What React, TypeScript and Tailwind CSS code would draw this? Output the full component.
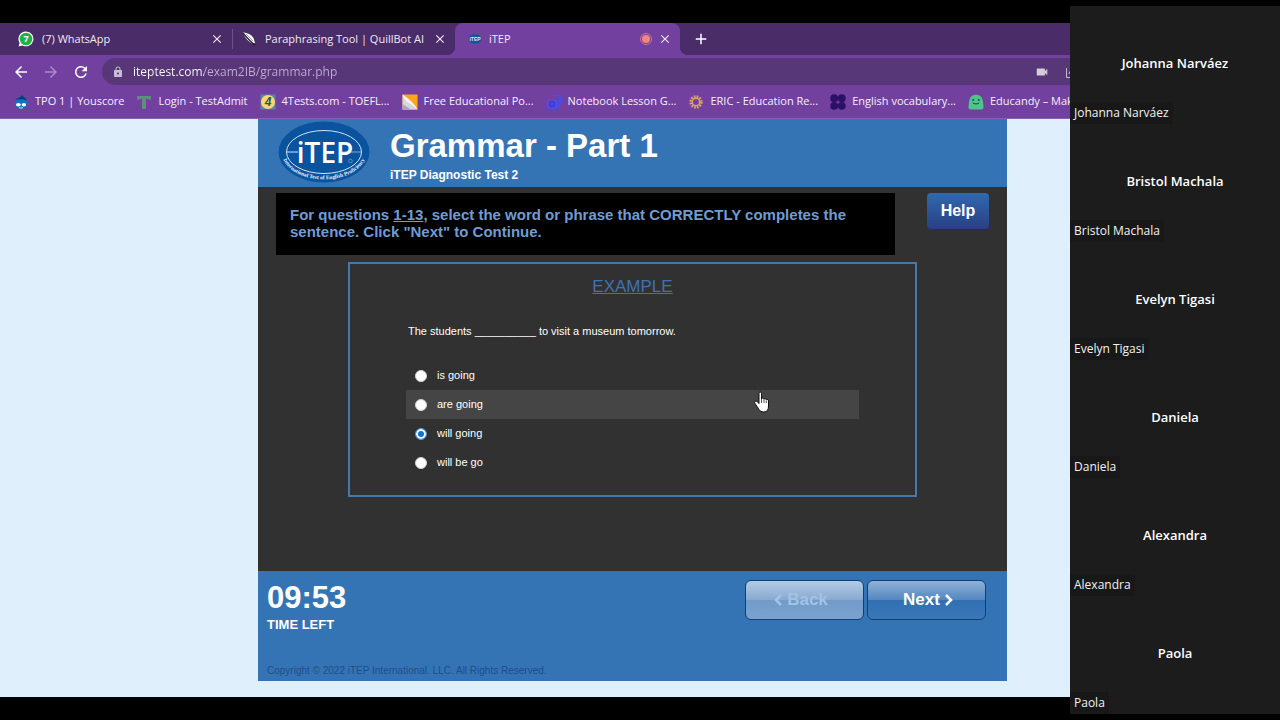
import { useState } from "react";
import type { ReactNode } from "react";
import { MdAdd, MdArrowBack, MdArrowForward, MdClose, MdLock, MdRefresh, MdVideocam } from "react-icons/md";

const participants = ["Johanna Narváez", "Bristol Machala", "Evelyn Tigasi", "Daniela", "Alexandra", "Paola"];

const choices = ["is going", "are going", "will going", "will be go"];

function WhatsAppIcon() {
  return (
    <svg viewBox="0 0 16 16" className="size-4 shrink-0" aria-hidden="true">
      <path d="M8 .5a7.4 7.4 0 1 1-3.5 13.9L.6 15.5l1-3.7A7.4 7.4 0 0 1 8 .5Z" fill="#fff" />
      <circle cx="8" cy="8" r="6.3" fill="#1fb24a" />
      <text x="8" y="11.3" textAnchor="middle" fontSize="9" fontWeight="700" fill="#fff" fontFamily="Open Sans">
        7
      </text>
    </svg>
  );
}

function QuillIcon() {
  return (
    <svg viewBox="0 0 16 16" className="size-4 shrink-0" aria-hidden="true">
      <path d="M2 1.500C6.500 1.800 10.500 3.500 12.500 7l1.500 5-2 .8C7.500 10.500 4 7.500 2 1.500Z" fill="#fff" />
      <path d="M2.200 2.200c3 4 6.500 7.500 11.500 11.800" stroke="#1d1226" strokeWidth="1.200" fill="none" />
      <path d="M5 3 12 10" stroke="#555" strokeWidth=".6" fill="none" />
    </svg>
  );
}

function ItepFavicon() {
  return (
    <svg viewBox="0 0 16 16" className="size-4 shrink-0" aria-hidden="true">
      <ellipse cx="8" cy="8" rx="6.500" ry="4.800" fill="#14549b" />
      <text x="8" y="9.800" textAnchor="middle" fontSize="5" fontWeight="700" fill="#dcebfa" fontFamily="Liberation Sans">
        iTEP
      </text>
    </svg>
  );
}

function DropIcon() {
  return (
    <svg viewBox="0 0 16 16" className="size-4 shrink-0" aria-hidden="true">
      <path d="M9 1c.8 1.700 5.200 3.600 5.200 8A6.200 6.200 0 0 1 8 15a6.200 6.200 0 0 1-6.200-6C1.800 5 7.500 4 9 1Z" fill="#0b74c4" />
      <path d="M9 1c.8 1.700 4 2.800 4.900 5.700C11 5 6 5 2.600 6.300 4.200 4 8 3.200 9 1Z" fill="#0a3a75" />
      <ellipse cx="5.400" cy="10.700" rx="2.400" ry="1.800" fill="#fff" />
      <ellipse cx="10.900" cy="10.700" rx="2.200" ry="1.800" fill="#fff" />
      <path d="M6 13.600q2 1 4 0" stroke="#fff" strokeWidth=".8" fill="none" />
    </svg>
  );
}

function TestAdmitIcon() {
  return (
    <svg viewBox="0 0 16 16" className="size-4 shrink-0" fill="#5f8f7c" aria-hidden="true">
      <rect x="1.500" y="2" width="13" height="3" />
      <rect x="1.500" y="2" width="1.500" height="4" />
      <rect x="13" y="2" width="1.500" height="4" />
      <rect x="6" y="2" width="4" height="13" />
    </svg>
  );
}

function FourTestsIcon() {
  return (
    <svg viewBox="0 0 16 16" className="size-4 shrink-0" aria-hidden="true">
      <rect x=".5" y=".5" width="15" height="15" fill="#5d83a0" />
      <circle cx="8" cy="8" r="7" fill="#f6d873" />
      <text x="8" y="12.300" textAnchor="middle" fontSize="12" fontWeight="700" fontStyle="italic" fill="#245b58" fontFamily="Liberation Sans">
        4
      </text>
    </svg>
  );
}

function PosterIcon() {
  return (
    <svg viewBox="0 0 16 16" className="size-4 shrink-0" aria-hidden="true">
      <rect x=".5" y=".5" width="15" height="15" fill="#ffa51e" />
      <path d="M.5.500 15.500 15.500H.5Z" fill="#d9d4de" />
      <path d="M.5 10v5.500H9Z" fill="#aaa5b5" />
      <path d="M.5.500Q3 8 8 9.500l7.500 6Q12 8 .5.500Z" fill="#f7f5f5" />
    </svg>
  );
}

function NotebookIcon() {
  return (
    <svg viewBox="0 0 16 16" className="size-4 shrink-0" fill="none" stroke="#4b4be6" aria-hidden="true">
      <path d="M5.500 3V1.500h9v9H13" />
      <path d="M3.500 5V3.500h9v9H11" />
      <rect x="1.500" y="5.500" width="9" height="9" fill="#5a45d4" />
      <path d="M4 8v4h4V8Z" stroke="#3434d0" />
    </svg>
  );
}

function EricIcon() {
  return (
    <svg viewBox="0 0 16 16" className="size-4 shrink-0" fill="none" aria-hidden="true">
      <circle cx="8" cy="8" r="5.300" stroke="#dda36c" strokeWidth="2.800" strokeDasharray="1.600 1.175" />
      <circle cx="8" cy="8" r="3.700" stroke="#dda36c" strokeWidth="1.400" />
    </svg>
  );
}

function VocabularyIcon() {
  return (
    <svg viewBox="0 0 16 16" className="size-4 shrink-0" fill="#2c0f66" aria-hidden="true">
      <circle cx="4.200" cy="4.200" r="3.900" />
      <circle cx="11.800" cy="4.200" r="3.900" />
      <circle cx="4.200" cy="11.800" r="3.900" />
      <circle cx="11.800" cy="11.800" r="3.900" />
    </svg>
  );
}

function EducandyIcon() {
  return (
    <svg viewBox="0 0 16 16" className="size-4 shrink-0" aria-hidden="true">
      <path d="M.5 13.500C.8 6 2 .8 8 .8s7.200 5.200 7.500 12.700q0 2-2 2h-11q-2 0-2-2Z" fill="#4fc48a" />
      <circle cx="5.200" cy="6" r="1" fill="#14523a" />
      <circle cx="10.800" cy="6" r="1" fill="#14523a" />
      <path d="M5 9.300q3 1.400 6 0" stroke="#14523a" fill="none" />
    </svg>
  );
}

const bookmarks: { label: string; icon: ReactNode }[] = [
  { label: "TPO 1 | Youscore", icon: <DropIcon /> },
  { label: "Login - TestAdmit", icon: <TestAdmitIcon /> },
  { label: "4Tests.com - TOEFL...", icon: <FourTestsIcon /> },
  { label: "Free Educational Po...", icon: <PosterIcon /> },
  { label: "Notebook Lesson G...", icon: <NotebookIcon /> },
  { label: "ERIC - Education Re...", icon: <EricIcon /> },
  { label: "English vocabulary...", icon: <VocabularyIcon /> },
  { label: "Educandy – Mak", icon: <EducandyIcon /> },
];

function ItepLogo() {
  return (
    <svg viewBox="0 0 92 62" className="h-[62px] w-[92px] shrink-0" role="img" aria-label="iTEP">
      <ellipse cx="46" cy="31" rx="45.500" ry="30.500" fill="#0a539e" />
      <ellipse cx="46" cy="31" rx="37.500" ry="21.500" fill="none" stroke="#cfe4f7" strokeWidth="1" />
      <path d="M9 31h11" stroke="#cfe4f7" strokeWidth="1" />
      <text x="47" y="41.500" textAnchor="middle" fontSize="28" fontWeight="600" fill="#fff" fontFamily="Open Sans">
        iTEP
      </text>
      <path d="M62 31h21" stroke="#cfe4f7" strokeWidth=".6" />
      <circle cx="72.500" cy="40" r="1.800" fill="none" stroke="#9fc3e6" strokeWidth=".5" />
      <path id="logo-arc" d="M4.500 37C16 65.500 76 65.500 87.500 37" fill="none" />
      <text fontSize="5.500" fontWeight="700" fill="#e8f3fd" fontFamily="Liberation Serif">
        <textPath href="#logo-arc" startOffset="50%" textAnchor="middle">
          International Test of English Proficiency
        </textPath>
      </text>
    </svg>
  );
}

function HandPointer() {
  return (
    <svg viewBox="0 0 18 24" className="pointer-events-none absolute top-0 right-[88px] h-6 w-[18px]" aria-hidden="true">
      <path
        d="M6 3.500q0-1.500 1.200-1.500t1.300 1.500V9q.3-1 1.300-1t1.200 1.300q.3-.8 1.200-.7t1.100 1.300q.3-.6 1.200-.4t1 1.500V16q0 5.800-4.500 6H10q-2.600-.2-4-2.500L2 13.500Q1 12 2 11.300t2.500.4L6 13.500Z"
        fill="#fff"
        stroke="#111"
        strokeWidth="1"
      />
      <path d="M8.500 9v4M11 9.500V13M13.300 10.500V13" stroke="#222" strokeWidth=".8" />
    </svg>
  );
}

function TabStrip() {
  return (
    <div className="flex h-8 items-stretch bg-[#4a2c69] text-[11px] text-[#f0e8f6]">
      <div className="flex w-[232px] shrink-0 items-center gap-2 pr-2 pl-[18px]">
        <WhatsAppIcon />
        <button className="flex-1 text-left">(7) WhatsApp</button>
        <button aria-label="Close tab">
          <MdClose className="size-3.5" />
        </button>
      </div>
      <div className="flex w-[223px] shrink-0 items-center pr-2">
        <span className="h-5 w-px bg-[#6d5189]" />
        <div className="flex flex-1 items-center gap-2 pl-2">
          <QuillIcon />
          <button className="flex-1 text-left whitespace-nowrap">Paraphrasing Tool | QuillBot AI</button>
          <button aria-label="Close tab">
            <MdClose className="size-3.5" />
          </button>
        </div>
      </div>
      <div className="relative flex w-[225px] shrink-0 items-center gap-1.5 rounded-t-lg bg-[#7241a0] pr-2 pl-3 before:absolute before:bottom-0 before:-left-2 before:size-2 before:bg-[radial-gradient(circle_at_0_0,transparent_8px,#7241a0_8px)] after:absolute after:-right-2 after:bottom-0 after:size-2 after:bg-[radial-gradient(circle_at_100%_0,transparent_8px,#7241a0_8px)]">
        <ItepFavicon />
        <button className="flex-1 text-left">iTEP</button>
        <span className="flex size-3 items-center justify-center rounded-full border border-[#d56f8c]">
          <span className="size-2 rounded-full bg-[#ef8585]" />
        </span>
        <button aria-label="Close tab">
          <MdClose className="size-3.5" />
        </button>
      </div>
      <button className="ml-3 text-white" aria-label="New tab">
        <MdAdd className="size-[18px]" />
      </button>
    </div>
  );
}

function Toolbar() {
  return (
    <div className="flex h-[33px] items-center bg-[#7241a0] pl-3">
      <div className="flex shrink-0 gap-3 pr-3">
        <button className="text-white" aria-label="Back">
          <MdArrowBack className="size-[18px]" />
        </button>
        <button className="text-[#ab88cb]" aria-label="Forward">
          <MdArrowForward className="size-[18px]" />
        </button>
        <button className="text-white" aria-label="Reload">
          <MdRefresh className="size-[18px]" />
        </button>
      </div>
      <div className="-mr-5 flex h-[27px] flex-1 items-center rounded-full bg-[#583778] pr-[11px] pl-2.5">
        <MdLock className="size-3 shrink-0 text-[#c9bcd6]" />
        <input
          type="text"
          aria-label="Address"
          defaultValue="iteptest.com/exam2IB/grammar.php"
          className="ml-[9px] h-5 min-w-0 flex-1 bg-[linear-gradient(to_right,#ffffff_71px,#c3aed6_71px)] bg-clip-text text-xs text-transparent outline-none"
        />
        <MdVideocam className="size-3.5 shrink-0 text-[#d8cbd8]" />
        <svg viewBox="0 0 14 14" className="ml-4 size-3.5 shrink-0" fill="none" stroke="#c9b6da" aria-hidden="true">
          <path d="M1.500 3v9.500h10V9M4 9c.5-3 2.500-4.500 6-4.500M8 2l3 2.500L8 7" />
        </svg>
      </div>
    </div>
  );
}

function BookmarkBar() {
  return (
    <nav className="flex h-[31px] items-center gap-3 border-b border-[#8560b3] bg-[#7241a0] pb-[3px] pl-[13px] text-[11px] text-[#f6effb]">
      {bookmarks.map(({ label, icon }) => (
        <a key={label} href="#" className="flex shrink-0 items-center gap-1.5 whitespace-nowrap">
          {icon}
          {label}
        </a>
      ))}
    </nav>
  );
}

function Exam() {
  const [answer, setAnswer] = useState("will going");

  return (
    <div className="flex flex-1 bg-[#e0effc] pr-[63px] pb-4 pl-[258px] font-['Liberation_Sans',Arial,sans-serif]">
      <main className="flex flex-1 flex-col bg-[#313131]">
        <header className="flex h-[68px] items-center gap-5 bg-[#3574b4] pb-0.5 pl-5 text-white">
          <ItepLogo />
          <div className="pt-2">
            <h1 className="text-[33px] leading-[38px] font-bold">Grammar - Part 1</h1>
            <p className="text-xs leading-5 font-bold">iTEP Diagnostic Test 2</p>
          </div>
        </header>

        <section className="flex items-start gap-8 px-[18px] pt-1.5">
          <p className="h-[62px] flex-1 bg-black px-3.5 py-[13px] text-[15px] leading-[17px] font-bold text-[#709cd4]">
            For questions <u>1-13</u>, select the word or phrase that CORRECTLY completes the sentence. Click "Next" to Continue.
          </p>
          <button className="h-9 w-[62px] rounded bg-linear-to-b from-[#3069ae] to-[#293f85] text-base font-bold text-white">Help</button>
        </section>

        <section className="mx-[90px] mt-[7px] border-2 border-[#4579ae] px-14 pb-[18px]">
          <h2 className="pt-[11px] text-center text-[17px] leading-6 text-[#3f72b4] underline">EXAMPLE</h2>
          <fieldset className="text-[11px] text-white">
            <legend className="pt-[23px] pb-[21px] pl-0.5 leading-[18px]">The students __________ to visit a museum tomorrow.</legend>
            {choices.map((choice) => (
              <label
                key={choice}
                className={`relative flex h-[29px] items-center gap-2.5 pl-[9px] ${choice === "are going" ? "bg-[#454545]" : ""}`}
              >
                <input
                  type="radio"
                  name="answer"
                  checked={answer === choice}
                  onChange={() => setAnswer(choice)}
                  className="size-3 appearance-none rounded-full border border-[#d5d5d5] bg-white checked:border-[#4f9aea] checked:bg-[#0f70d8] checked:shadow-[inset_0_0_0_2px_white]"
                />
                {choice}
                {choice === "are going" && <HandPointer />}
              </label>
            ))}
          </fieldset>
        </section>

        <footer className="mt-auto flex h-[110px] flex-col justify-between bg-[#3574b4] pr-[21px] pl-[9px]">
          <div className="flex items-start justify-between pt-[9px] font-bold text-white">
            <div className="pt-px">
              <p className="text-[31px] leading-[34px]">09:53</p>
              <p className="text-[13px] leading-5">TIME LEFT</p>
            </div>
            <div className="flex gap-[3px] text-[17px]">
              <button
                disabled
                className="flex h-10 w-[119px] items-center justify-center gap-1 rounded-md border border-[#123f72] bg-[linear-gradient(#b3cbe5,#88a9d0_50%,#729bc9_50%,#7ba3cf)] pr-2 text-[#a3c3e6]"
              >
                <svg viewBox="0 0 10 14" className="h-3.5 w-2.5" fill="none" stroke="currentColor" strokeWidth="2.500" aria-hidden="true">
                  <path d="M8 2 3 7l5 5" />
                </svg>
                Back
              </button>
              <button className="flex h-10 w-[119px] items-center justify-center gap-1 rounded-md border border-[#123f72] bg-[linear-gradient(#8fb2d8,#5386bf_50%,#306fb3_50%,#3b78b8)] pl-1">
                Next
                <svg viewBox="0 0 10 14" className="h-3.5 w-2.5" fill="none" stroke="currentColor" strokeWidth="2.500" aria-hidden="true">
                  <path d="m2 2 5 5-5 5" />
                </svg>
              </button>
            </div>
          </div>
          <p className="pb-[3px] text-[10px] leading-[14px] text-[#1f4c8c]">Copyright © 2022 iTEP International. LLC. All Rights Reserved.</p>
        </footer>
      </main>
    </div>
  );
}

export default function App() {
  return (
    <div className="flex min-h-screen bg-black font-['Open_Sans','Noto_Sans',sans-serif]">
      <div className="flex min-w-0 flex-1 flex-col overflow-hidden py-[23px]">
        <TabStrip />
        <Toolbar />
        <BookmarkBar />
        <Exam />
      </div>

      <aside className="flex w-[210px] shrink-0 flex-col py-1.5">
        {participants.map((name) => (
          <div key={name} className="flex flex-1 flex-col items-start bg-[#1c1c1c] text-xs text-[#f2f2f2]">
            <p className="flex flex-1 items-end self-center pb-[29px] text-[13px] leading-5 font-semibold text-white">{name}</p>
            <p className="bg-[#181818] px-1 leading-[22px]">{name}</p>
          </div>
        ))}
      </aside>
    </div>
  );
}
